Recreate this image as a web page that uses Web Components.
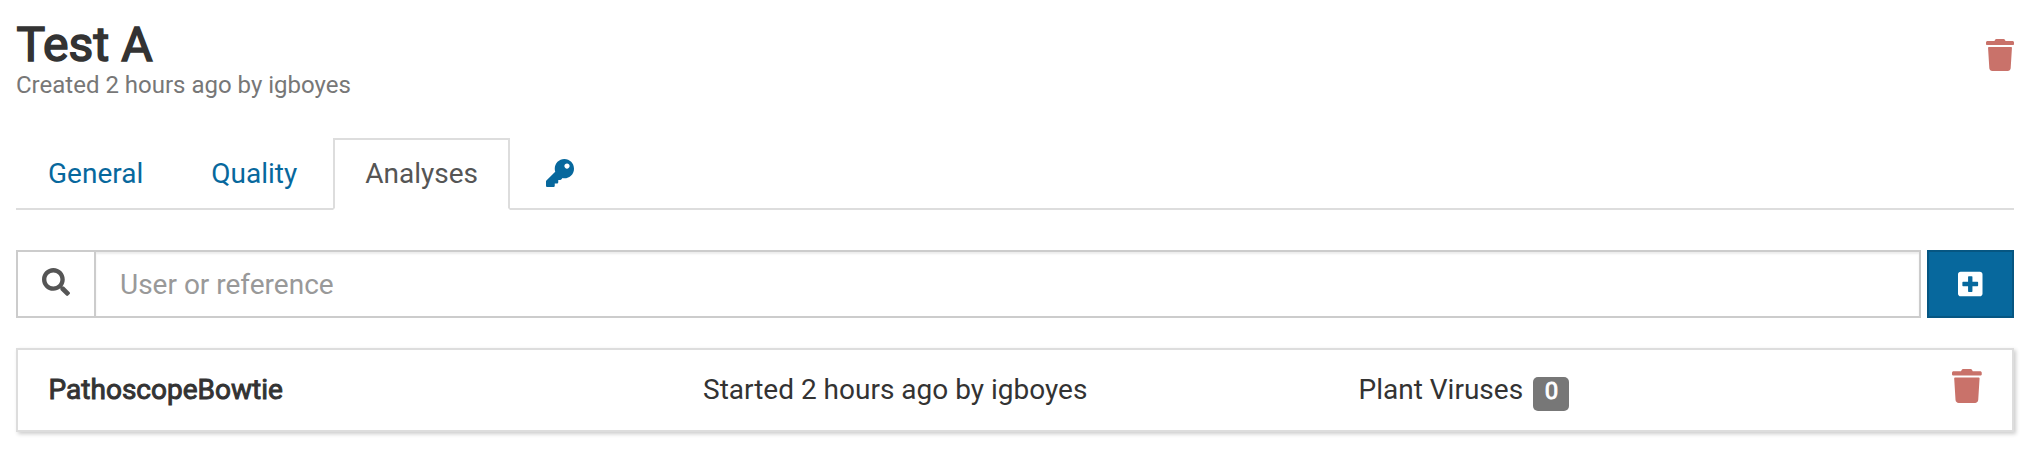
<!DOCTYPE html>
<html lang="en">
<head>
<meta charset="utf-8">
<title>Test A</title>
<style>
body{margin:0;background:#fff;color:#333;font:28px/40px Roboto,"Liberation Sans",sans-serif}
</style>
</head>
<body>
<sample-page></sample-page>
<script>
const ICONS={
trash:[448,"M0 84V56c0-13.3 10.7-24 24-24h112l9.4-18.7c4-8.2 12.4-13.3 21.4-13.3h114.3c9.1 0 17.4 5.1 21.5 13.3L312 32h112c13.3 0 24 10.7 24 24v28c0 6.6-5.4 12-12 12H12C5.4 96 0 90.6 0 84zm415.2 56.7L394.8 467c-1.6 25.3-22.6 45-47.9 45H101.1c-25.3 0-46.3-19.7-47.9-45L32.8 140.7c-.4-6.9 5.1-12.7 12-12.7h358.5c6.8 0 12.3 5.8 11.9 12.7z"],
key:[512,"M512 176.001C512 273.203 433.202 352 336 352c-11.22 0-22.19-1.062-32.827-3.069l-24.012 27.014A23.999 23.999 0 0 1 261.223 384H224v40c0 13.255-10.745 24-24 24h-40v40c0 13.255-10.745 24-24 24H24c-13.255 0-24-10.745-24-24v-78.059c0-6.365 2.529-12.47 7.029-16.971l161.802-161.802C163.108 213.814 160 195.271 160 176 160 78.798 238.797.001 335.999 0 433.488-.001 512 78.511 512 176.001zM336 128c0 26.51 21.49 48 48 48s48-21.49 48-48-21.49-48-48-48-48 21.49-48 48z"],
search:[512,"M505 442.7L405.3 343c-4.5-4.5-10.6-7-17-7H372c27.6-35.3 44-79.7 44-128C416 93.1 322.9 0 208 0S0 93.1 0 208s93.1 208 208 208c48.3 0 92.7-16.4 128-44v16.3c0 6.4 2.5 12.5 7 17l99.7 99.7c9.4 9.4 24.6 9.4 33.9 0l28.3-28.3c9.4-9.4 9.4-24.6.1-34zM208 336c-70.7 0-128-57.2-128-128 0-70.7 57.2-128 128-128 70.7 0 128 57.2 128 128 0 70.7-57.2 128-128 128z"],
plus:[448,"M400 32H48C21.5 32 0 53.5 0 80v352c0 26.5 21.5 48 48 48h352c26.5 0 48-21.5 48-48V80c0-26.5-21.5-48-48-48zm-32 252c0 6.6-5.4 12-12 12h-92v92c0 6.6-5.4 12-12 12h-56c-6.6 0-12-5.4-12-12v-92H92c-6.6 0-12-5.4-12-12v-56c0-6.6 5.4-12 12-12h92v-92c0-6.6 5.4-12 12-12h56c6.6 0 12 5.4 12 12v92h92c6.6 0 12 5.4 12 12v56z"]
};
function define(name,html){
  customElements.define(name,class extends HTMLElement{
    constructor(){super();this.attachShadow({mode:"open"}).innerHTML=html}
  });
}
customElements.define("fa-icon",class extends HTMLElement{
  connectedCallback(){
    const [w,d]=ICONS[this.getAttribute("name")],s=+this.getAttribute("size")||28;
    (this.shadowRoot||this.attachShadow({mode:"open"})).innerHTML=
    `<style>:host{display:block;flex:none}svg{display:block;fill:currentColor}</style><svg width="${w*s/512}" height="${s}" viewBox="0 0 ${w} 512"><path d="${d}"/></svg>`;
  }
});
define("page-header",`<style>
:host{display:flex;justify-content:space-between;align-items:flex-start;height:138px;box-sizing:border-box;padding-top:18px}
h1{margin:0;padding-left:.6px;font-size:48px;line-height:53px;font-weight:400;letter-spacing:.1px;-webkit-text-stroke:1.6px currentColor}
small{display:block;font-size:24px;line-height:28px;color:#777}
fa-icon{color:#c9726a;margin-top:21px}
</style><div><h1><slot name="title"></slot></h1><small><slot></slot></small></div><fa-icon name="trash" size="32"></fa-icon>`);
define("nav-tabs",`<style>:host{display:flex;gap:4px;height:72px;box-sizing:border-box;border-bottom:2px solid #ddd}</style><slot></slot>`);
define("nav-tab",`<style>
:host{display:flex;align-items:center;height:72px;box-sizing:border-box;padding:0 30px;border:2px solid transparent;color:#07689d}
:host([active]){color:#555;background:#fff;border-color:#ddd #ddd #fff}
::slotted(fa-icon){margin-bottom:3px}
</style><slot></slot>`);
define("search-bar",`<style>
:host{display:flex;height:68px;margin-top:40px}
.addon{box-sizing:border-box;width:78px;border:2px solid #ccc;border-right:0;padding:16px 0 0 24px;color:#555}
input{flex:1;min-width:0;box-sizing:border-box;border:2px solid #ccc;border-radius:0;padding:2px 24px 0;font:inherit;color:#555;background:#fff;box-shadow:inset 0 2px 2px rgba(0,0,0,.075);outline:0}
input::placeholder{color:#999;opacity:1}
button{display:flex;align-items:center;justify-content:center;box-sizing:border-box;width:87px;margin:0 0 0 6px;padding:0 0 1px;border:2px solid #065682;background:#07689d;color:#fff}
</style><div class="addon"><fa-icon name="search"></fa-icon></div><input placeholder="User or reference" aria-label="Search"><button aria-label="New analysis"><fa-icon name="plus"></fa-icon></button>`);
define("count-badge",`<style>:host{display:inline-block;box-sizing:border-box;min-width:36px;height:34px;border-radius:5px;background:#777;color:#fff;font-size:24px;line-height:29px;text-align:center;-webkit-text-stroke:.85px currentColor}</style><slot></slot>`);
define("analysis-item",`<style>
:host{display:grid;grid-template-columns:655px 655.5px 1fr auto;box-sizing:border-box;height:84px;margin-top:30px;padding:20px 30px 0;border:2px solid #ddd;background:#fff;box-shadow:2px 2px 4px rgba(0,0,0,.2)}
.name{padding-left:.6px;-webkit-text-stroke:.95px currentColor}
.ref{display:flex;gap:10.3px}
count-badge{margin-top:7px}
fa-icon{color:#c9726a;margin-top:-1px}
</style><div class="name"><slot name="name"></slot></div><div><slot name="time"></slot></div><div class="ref"><slot name="ref"></slot><count-badge><slot name="count"></slot></count-badge></div><fa-icon name="trash" size="34"></fa-icon>`);
define("sample-page",`<style>:host{display:block;padding:0 16px 26px}</style>
<page-header><span slot="title">Test A</span>Created 2 hours ago by igboyes</page-header>
<nav-tabs><nav-tab>General</nav-tab><nav-tab>Quality</nav-tab><nav-tab active>Analyses</nav-tab><nav-tab><fa-icon name="key"></fa-icon></nav-tab></nav-tabs>
<search-bar></search-bar>
<analysis-item><span slot="name">PathoscopeBowtie</span><span slot="time">Started 2 hours ago by igboyes</span><span slot="ref">Plant Viruses</span><span slot="count">0</span></analysis-item>`);
</script>
</body>
</html>
